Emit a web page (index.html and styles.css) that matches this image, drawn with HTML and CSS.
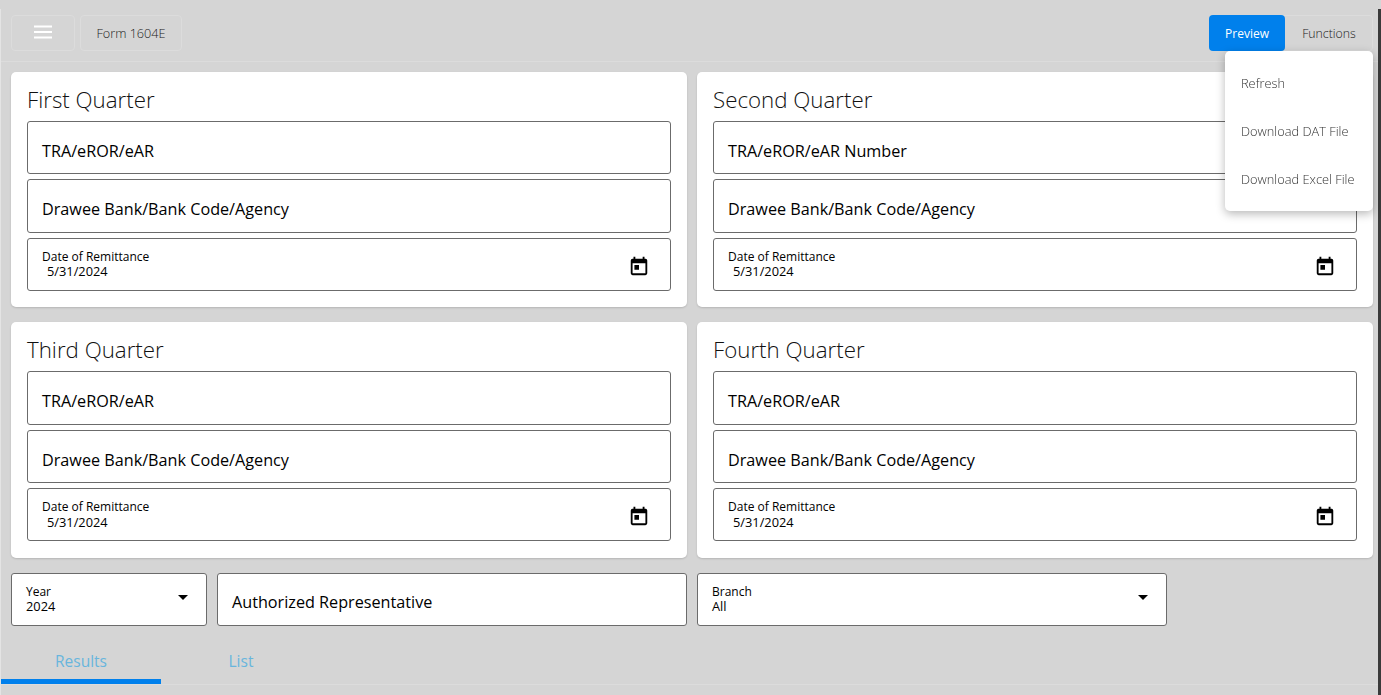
FILE: index.html
```html
<!DOCTYPE html>
<html lang="en">
<head>
<meta charset="utf-8">
<title>Form 1604E</title>
<link rel="stylesheet" href="styles.css">
</head>
<body>
<div class="page">
  <header class="toolbar">
    <button class="tool-btn menu-btn" aria-label="Menu">
      <svg class="burger" width="20" height="14" viewBox="0 0 20 14"><path d="M1 1.5h18M1 7h18M1 12.5h18" stroke="#fff" stroke-width="2"/></svg>
    </button>
    <button class="tool-btn title-btn">Form 1604E</button>
    <div class="toolbar-right">
      <button class="preview-btn">Preview</button>
      <button class="functions-btn">Functions</button>
    </div>
    <div class="menu">
      <div class="menu-item">Refresh</div>
      <div class="menu-item">Download DAT File</div>
      <div class="menu-item">Download Excel File</div>
    </div>
  </header>

  <main class="grid">
    <section class="card">
      <h2>First Quarter</h2>
      <div class="field"><span class="value">TRA/eROR/eAR</span></div>
      <div class="field"><span class="value">Drawee Bank/Bank Code/Agency</span></div>
      <div class="field date"><div class="stack"><span class="label">Date of Remittance</span><span class="sub indent">5/31/2024</span></div>
        <svg class="cal" width="22" height="22" viewBox="0 0 24 24"><path d="M19 4h-1V2h-2v2H8V2H6v2H5a2 2 0 0 0-2 2v14a2 2 0 0 0 2 2h14a2 2 0 0 0 2-2V6a2 2 0 0 0-2-2zm0 16H5V9h14zM7 11h5v5H7z"/></svg></div>
    </section>
    <section class="card">
      <h2>Second Quarter</h2>
      <div class="field"><span class="value">TRA/eROR/eAR Number</span></div>
      <div class="field"><span class="value">Drawee Bank/Bank Code/Agency</span></div>
      <div class="field date"><div class="stack"><span class="label">Date of Remittance</span><span class="sub indent">5/31/2024</span></div>
        <svg class="cal" width="22" height="22" viewBox="0 0 24 24"><path d="M19 4h-1V2h-2v2H8V2H6v2H5a2 2 0 0 0-2 2v14a2 2 0 0 0 2 2h14a2 2 0 0 0 2-2V6a2 2 0 0 0-2-2zm0 16H5V9h14zM7 11h5v5H7z"/></svg></div>
    </section>
    <section class="card">
      <h2>Third Quarter</h2>
      <div class="field"><span class="value">TRA/eROR/eAR</span></div>
      <div class="field"><span class="value">Drawee Bank/Bank Code/Agency</span></div>
      <div class="field date"><div class="stack"><span class="label">Date of Remittance</span><span class="sub indent">5/31/2024</span></div>
        <svg class="cal" width="22" height="22" viewBox="0 0 24 24"><path d="M19 4h-1V2h-2v2H8V2H6v2H5a2 2 0 0 0-2 2v14a2 2 0 0 0 2 2h14a2 2 0 0 0 2-2V6a2 2 0 0 0-2-2zm0 16H5V9h14zM7 11h5v5H7z"/></svg></div>
    </section>
    <section class="card">
      <h2>Fourth Quarter</h2>
      <div class="field"><span class="value">TRA/eROR/eAR</span></div>
      <div class="field"><span class="value">Drawee Bank/Bank Code/Agency</span></div>
      <div class="field date"><div class="stack"><span class="label">Date of Remittance</span><span class="sub indent">5/31/2024</span></div>
        <svg class="cal" width="22" height="22" viewBox="0 0 24 24"><path d="M19 4h-1V2h-2v2H8V2H6v2H5a2 2 0 0 0-2 2v14a2 2 0 0 0 2 2h14a2 2 0 0 0 2-2V6a2 2 0 0 0-2-2zm0 16H5V9h14zM7 11h5v5H7z"/></svg></div>
    </section>
  </main>

  <div class="filters">
    <div class="field select year"><div class="stack"><span class="label">Year</span><span class="sub">2024</span></div><span class="caret"></span></div>
    <div class="field rep"><span class="value">Authorized Representative</span></div>
    <div class="field select branch"><div class="stack"><span class="label">Branch</span><span class="sub">All</span></div><span class="caret"></span></div>
  </div>

  <nav class="tabs">
    <div class="tab active">Results</div>
    <div class="tab">List</div>
  </nav>
</div>
</body>
</html>
```

FILE: styles.css
```css
* { box-sizing: border-box; }
html, body { margin: 0; height: 100%; }
body {
  background: #d5d5d5;
  font-family: "Open Sans", "Noto Sans", sans-serif;
  color: #000;
  overflow: hidden;
}
.page {
  width: 1378px;
  height: 686px;
  margin-top: 9px;
  padding-top: 6px;
  border-left: 1px solid #e4e4e4;
  border-right: 0;
}
body::after {
  content: "";
  position: fixed;
  top: 9px;
  right: 0;
  bottom: 0;
  width: 3px;
  background: #3a3a3a;
}
.toolbar {
  display: flex;
  height: 47px;
  padding: 0 5px 0 10px;
  gap: 5px;
  border-bottom: 1px solid #dcdcdc;
  position: relative;
}
button { font: inherit; background: none; color: inherit; cursor: pointer; }
.tool-btn {
  height: 36px;
  border: 1px solid #dcdcdc;
  border-radius: 4px;
  display: flex;
  align-items: center;
  justify-content: center;
}
.burger { margin-bottom: 3px; }
.menu-btn { width: 64px; }
.title-btn { width: 102px; font-size: 12.7px; font-weight: 300; color: #222; }
.toolbar-right { margin-left: auto; display: flex; height: 36px; border: 1px solid #dcdcdc; border-left: 0; border-radius: 4px; }
.preview-btn {
  width: 76px;
  border: 0;
  background: #0080ec;
  color: #fff;
  border-radius: 4px;
  font-size: 12px;
  margin-top: -1px;
  height: 36px;
}
.functions-btn { width: 87px; border: 0; padding-left: 7px; font-size: 12.3px; font-weight: 300; color: #222; }
.menu {
  position: absolute;
  top: 36px;
  right: 5px;
  width: 148px;
  height: 160px;
  background: #fff;
  border-radius: 5px;
  box-shadow: 0 3px 10px rgba(0,0,0,.28);
  display: flex;
  flex-direction: column;
  z-index: 2;
}
.menu-item {
  height: 48px;
  padding-left: 16px;
  display: flex;
  align-items: center;
  font-size: 12.8px;
  font-weight: 300;
  color: #333;
  white-space: nowrap;
}
.menu-item:first-child { margin-top: 8px; }
.grid {
  display: grid;
  grid-template-columns: 676px 676px;
  column-gap: 10px;
  row-gap: 15.3px;
  padding: 10px 0 0 10px;
}
.card {
  background: #fff;
  border-radius: 5px;
  box-shadow: 0 1px 2px rgba(0,0,0,.15);
  padding: 12px 16px 16.1px;
  display: flex;
  flex-direction: column;
  gap: 5px;
}
h2 {
  margin: 0;
  height: 32px;
  font-size: 22.3px;
  line-height: 31px;
  font-weight: 300;
  color: #111;
}
.field {
  background: #fff;
  border: 1px solid #6b6b6b;
  border-radius: 3px;
  height: 53.35px;
  padding: 0 14px;
  display: flex;
  align-items: center;
  flex: none;
}
.value { font-size: 16.2px; padding-top: 6.5px; }
.date { justify-content: space-between; }
.stack { display: flex; flex-direction: column; line-height: 15.5px; margin-top: -0.4px; }
.label { font-size: 12px; }
.sub { font-size: 12.8px; }
.indent { padding-left: 5px; }
.cal { margin-right: 6px; margin-top: 3px; }
.filters {
  display: flex;
  gap: 10px;
  padding: 15px 0 0 10px;
}
.select { justify-content: space-between; }
.year { width: 196px; }
.rep { width: 470px; }
.branch { width: 470px; }
.caret {
  width: 0;
  height: 0;
  border-left: 5px solid transparent;
  border-right: 5px solid transparent;
  border-top: 5px solid #000;
  margin-right: 4px;
  margin-top: -4px;
}
.tabs {
  display: flex;
  margin-top: 16.05px;
  height: 43px;
  border-bottom: 1px solid #dcdcdc;
}
.tab {
  width: 160px;
  height: 42px;
  text-align: center;
  font-size: 15.5px;
  line-height: 39px;
  color: #68b5dd;
}
.tab.active { border-bottom: 5px solid #0080ec; }
```
